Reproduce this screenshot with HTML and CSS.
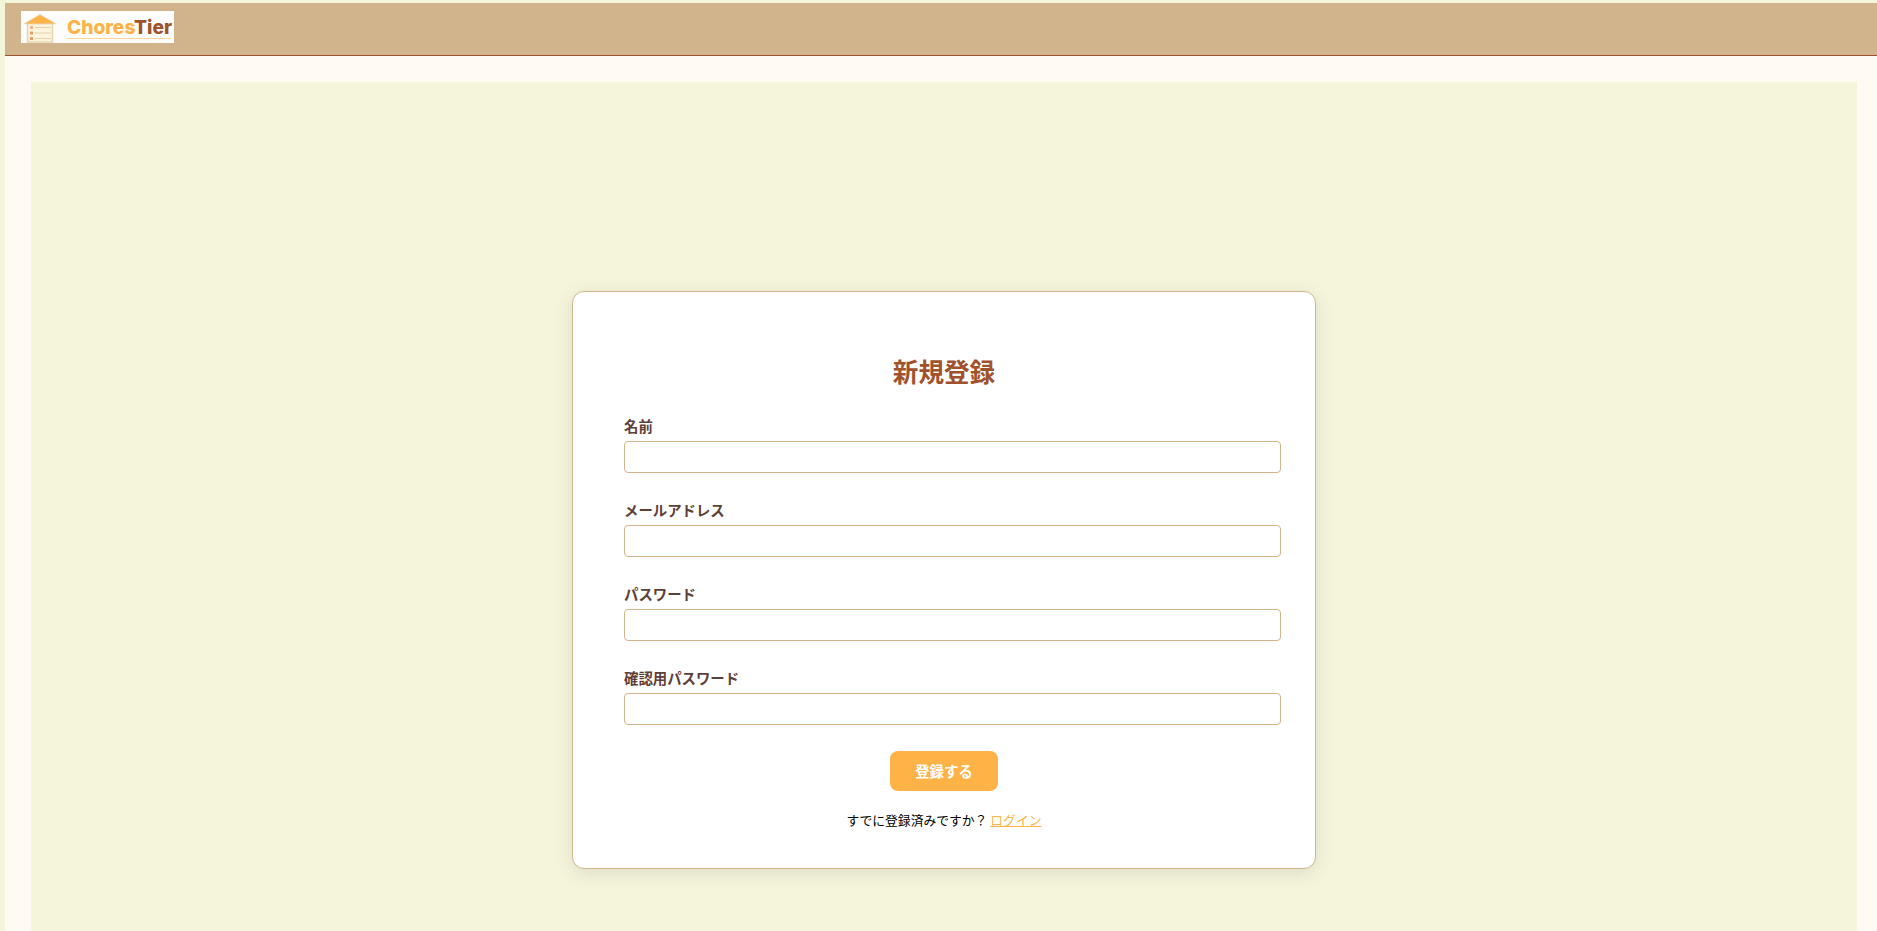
FILE: index.html
```html
<!DOCTYPE html>
<html lang="ja">
<head>
<meta charset="utf-8">
<title>ChoresTier 新規登録</title>
<link rel="stylesheet" href="styles.css">
</head>
<body>
<div class="app">
  <header class="site-header">
    <a class="logo" href="#">
      <svg class="logo-mark" width="38" height="32" viewBox="0 0 38 32" aria-hidden="true">
        <rect x="6.5" y="12.5" width="25" height="18.5" fill="#fdf4de" stroke="#e6d3ad" stroke-width="1.4"/>
        <path d="M3.5 12.7 19 3.7l15.5 9z" fill="#ffb347" stroke="#e3c795" stroke-width="0.8"/>
        <path d="M14 16.5h16M14 22h16M14 27.5h16" stroke="#e6d3ad" stroke-width="1" fill="none"/>
        <rect x="9" y="15" width="3" height="3" fill="#f0b58c"/>
        <rect x="9" y="20.5" width="3" height="3" fill="#e89c6c"/>
        <rect x="9" y="26" width="3" height="3" fill="#e89c6c"/>
      </svg>
      <span class="logo-text"><span class="logo-a">Chores</span><span class="logo-b">Tier</span></span>
    </a>
  </header>
  <main class="page">
    <div class="panel">
      <section class="card">
        <h1 class="title">新規登録</h1>
        <form class="form">
          <div class="field">
            <label class="label" for="name">名前</label>
            <input class="input" id="name" type="text">
          </div>
          <div class="field">
            <label class="label" for="email">メールアドレス</label>
            <input class="input" id="email" type="email">
          </div>
          <div class="field">
            <label class="label" for="pw">パスワード</label>
            <input class="input" id="pw" type="password">
          </div>
          <div class="field">
            <label class="label" for="pw2">確認用パスワード</label>
            <input class="input" id="pw2" type="password">
          </div>
          <div class="actions">
            <button class="submit" type="button">登録する</button>
          </div>
        </form>
        <p class="note">すでに登録済みですか？ <a class="note-link" href="#">ログイン</a></p>
      </section>
    </div>
  </main>
</div>
</body>
</html>
```

FILE: styles.css
```css
html, body {
  margin: 0;
  padding: 0;
  height: 931px;
  overflow: hidden;
  background: #f5f5dc;
}
body {
  font-family: "Noto Sans CJK JP", "Noto Sans", sans-serif;
  color: #000;
}
.app {
  padding: 3px 0 0 5px;
}
.site-header {
  background: #d2b48c;
  border-bottom: 1px solid #a0522d;
  padding: 8px 0 0 16px;
  box-sizing: content-box;
  height: 44px;
}
.logo {
  display: flex;
  width: 153px;
  height: 32px;
  background: #fdfdfd;
  text-decoration: none;
}
.logo-mark {
  display: block;
  flex: none;
}
.logo-text {
  margin: 6px 0 0 8px;
  height: 21px;
  width: 104px;
  border-bottom: 1px solid #ffd595;
  font-family: Inter, "Liberation Sans", sans-serif;
  font-weight: 800;
  font-size: 19.2px;
  line-height: 20px;
  white-space: nowrap;
}
.logo-a { color: #ffb347; }
.logo-b { color: #a0522d; }
.page {
  background: #fffaf2;
  padding: 26px 20px 0 26px;
}
.panel {
  background: #f5f5dc;
  height: 860px;
  padding-top: 209px;
  box-sizing: border-box;
}
.card {
  box-sizing: border-box;
  width: 744px;
  height: 578px;
  margin: 0 auto;
  padding: 60px 51px 0;
  background: #fff;
  border: 1px solid #d2b48c;
  border-radius: 12px;
  box-shadow: 0 4px 20px rgba(0, 0, 0, 0.1);
}
.title {
  margin: 0 0 25px;
  text-align: center;
  font-size: 25.6px;
  line-height: 38px;
  font-weight: 700;
  color: #a0522d;
}
.field {
  margin-bottom: 26px;
}
.label {
  display: block;
  font-size: 14.4px;
  line-height: 21px;
  font-weight: 700;
  color: #5d4037;
  margin-bottom: 5px;
}
.input {
  display: block;
  box-sizing: content-box;
  width: 100%;
  height: 15px;
  margin: 0;
  padding: 7px 7px 8px 8px;
  border: 1px solid #d2b48c;
  border-radius: 4px;
  background: #fff;
  font-size: 13px;
  outline: none;
}
.actions {
  display: flex;
  justify-content: center;
}
.submit {
  width: 108px;
  height: 40px;
  border: 0;
  border-radius: 8px;
  background: #ffb347;
  color: #fff;
  font-family: inherit;
  font-size: 14.4px;
  font-weight: 700;
  padding: 0 0 2px;
}
.note {
  margin: 19px 0 0;
  text-align: center;
  font-size: 12.8px;
  line-height: 19px;
}
.note-link {
  color: #ffb347;
  text-decoration: underline;
}
```
